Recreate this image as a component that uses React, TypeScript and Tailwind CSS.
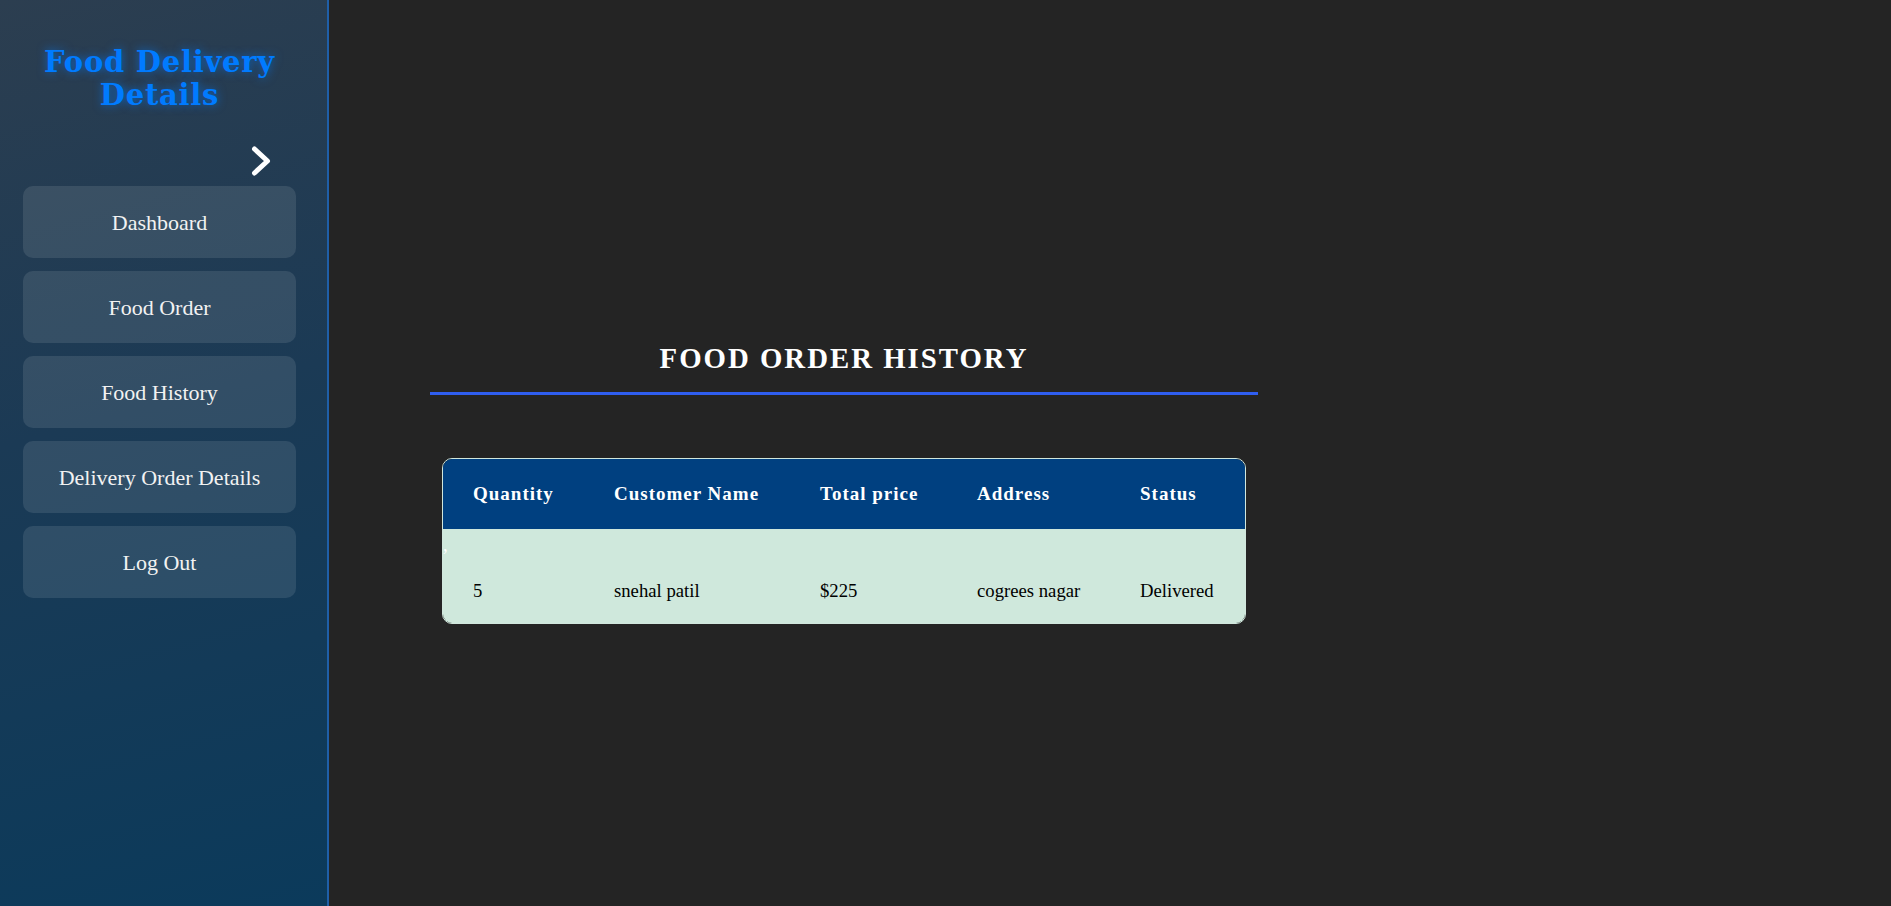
const menuItems = ["Dashboard", "Food Order", "Food History", "Delivery Order Details", "Log Out"];

type OrderRow = {
  quantity: number;
  customerName: string;
  totalPrice: string;
  address: string;
  status: string;
};

const orders: OrderRow[] = [
  { quantity: 5, customerName: "snehal patil", totalPrice: "$225", address: "cogrees nagar", status: "Delivered" },
];

const columns = ["Quantity", "Customer Name", "Total price", "Address", "Status"];

function ChevronRight() {
  return (
    <svg width="20" height="32" viewBox="0 0 20 32" fill="none">
      <polyline
        points="3.5,4 16.5,16 3.5,28"
        stroke="white"
        strokeWidth="5"
        strokeLinecap="round"
        strokeLinejoin="round"
      />
    </svg>
  );
}

function Sidebar() {
  return (
    <aside className="w-[329px] shrink-0 h-full border-r-2 border-[#1f5fa8] bg-[linear-gradient(165deg,#2c3e50_0%,#1b3a55_45%,#0b3a5b_100%)] pl-[23px] pr-[31px] pt-[46px]">
      <h1 className="text-center font-['DejaVu_Serif',serif] font-bold text-[29px] leading-[33px] tracking-[0.75px] text-[#007bff] [text-shadow:0_0_10px_rgba(0,123,255,0.65)]">
        Food Delivery
        <br />
        Details
      </h1>
      <div className="flex justify-end pr-[25px] mt-[33px]">
        <ChevronRight />
      </div>
      <nav className="flex flex-col gap-[13px] mt-[9px]">
        {menuItems.map((item) => (
          <div
            key={item}
            className="h-[72px] flex items-center justify-center rounded-[10px] bg-white/10 text-[22px] text-[#f2f2f2]"
          >
            {item}
          </div>
        ))}
      </nav>
    </aside>
  );
}

function OrderTable() {
  return (
    <div className="mx-3 mt-[63px] rounded-[10px] border border-[#d1e7dd] overflow-hidden">
      <table className="w-full table-fixed border-collapse">
        <colgroup>
          <col className="w-[141px]" />
          <col className="w-[206px]" />
          <col className="w-[157px]" />
          <col className="w-[163px]" />
          <col />
        </colgroup>
        <thead>
          <tr className="bg-[#004080]">
            {columns.map((c) => (
              <th
                key={c}
                className="text-left pl-[30px] py-6 text-[19px] leading-[22px] font-bold tracking-[1px] text-white"
              >
                {c}
              </th>
            ))}
          </tr>
        </thead>
        <tbody className="bg-[#cfe8dc]">
          <tr>
            <td className="h-[32px] align-top pt-[5px] text-[18.7px] leading-[22px] text-white">,</td>
            <td colSpan={4} />
          </tr>
          {orders.map((o, i) => (
            <tr key={i} className="text-[18.7px] leading-[22px] text-black">
              <td className="pl-[30px] pt-[19px] pb-[21px]">{o.quantity}</td>
              <td className="pl-[30px] pt-[19px] pb-[21px]">{o.customerName}</td>
              <td className="pl-[30px] pt-[19px] pb-[21px]">{o.totalPrice}</td>
              <td className="pl-[30px] pt-[19px] pb-[21px]">{o.address}</td>
              <td className="pl-[30px] pt-[19px] pb-[21px]">{o.status}</td>
            </tr>
          ))}
        </tbody>
      </table>
    </div>
  );
}

export default function App() {
  return (
    <div className="flex h-[906px] w-full bg-[#242424] font-['Liberation_Serif',serif] overflow-hidden">
      <Sidebar />
      <main className="flex-1 pl-[101px] pt-[342px]">
        <div className="w-[828px]">
          <h2 className="text-center text-white font-bold text-[28.8px] leading-[32px] tracking-[2px] pb-[18px] border-b-[3px] border-[#2f5ef0]">
            FOOD ORDER HISTORY
          </h2>
          <OrderTable />
        </div>
      </main>
    </div>
  );
}
